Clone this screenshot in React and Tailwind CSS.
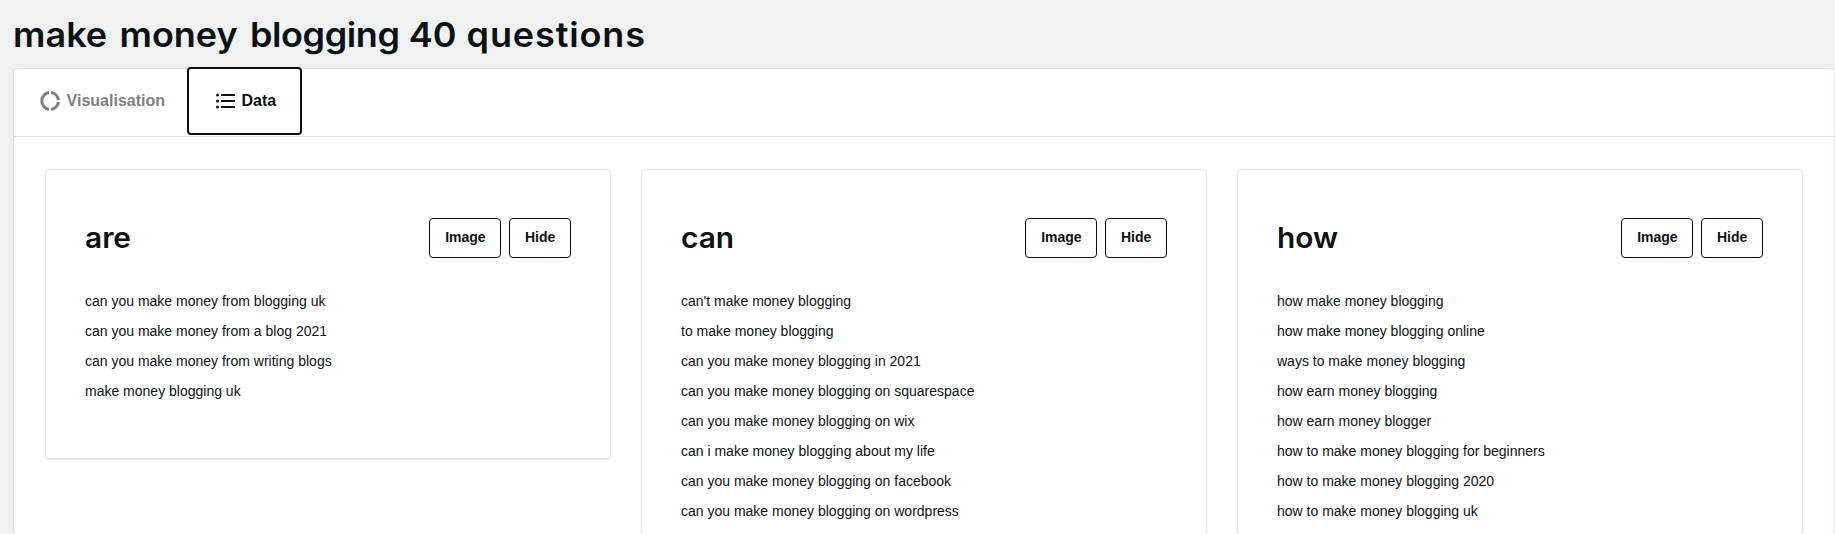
import { useState } from 'react'

const groups = [
  {
    title: 'are',
    questions: [
      'can you make money from blogging uk',
      'can you make money from a blog 2021',
      'can you make money from writing blogs',
      'make money blogging uk',
    ],
  },
  {
    title: 'can',
    questions: [
      "can't make money blogging",
      'to make money blogging',
      'can you make money blogging in 2021',
      'can you make money blogging on squarespace',
      'can you make money blogging on wix',
      'can i make money blogging about my life',
      'can you make money blogging on facebook',
      'can you make money blogging on wordpress',
    ],
  },
  {
    title: 'how',
    questions: [
      'how make money blogging',
      'how make money blogging online',
      'ways to make money blogging',
      'how earn money blogging',
      'how earn money blogger',
      'how to make money blogging for beginners',
      'how to make money blogging 2020',
      'how to make money blogging uk',
    ],
  },
]

function WheelIcon() {
  return (
    <svg viewBox="0 0 20 20" className="h-5 w-5" fill="none" stroke="currentColor" strokeWidth="3">
      <path d="M11 1.6A8.5 8.5 0 0 1 18.4 9" />
      <path d="M18.4 11A8.5 8.5 0 0 1 11 18.4" />
      <path d="M9 18.4A8.5 8.5 0 0 1 9 1.6" />
    </svg>
  )
}

function ListIcon() {
  return (
    <svg viewBox="0 0 20 20" className="h-5 w-5" fill="currentColor">
      <circle cx="1.5" cy="4" r="1.5" />
      <circle cx="1.5" cy="10" r="1.5" />
      <circle cx="1.5" cy="16" r="1.5" />
      <path d="M5 3h14v2H5zM5 9h14v2H5zM5 15h14v2H5z" />
    </svg>
  )
}

function CardButton({ children, onClick }) {
  return (
    <button
      type="button"
      onClick={onClick}
      className="h-10 rounded border border-[#0b0f10] px-[14.7px] pb-0.5 text-sm font-bold"
    >
      {children}
    </button>
  )
}

function QuestionCard({ group, onHide }) {
  return (
    <article className="rounded border border-[#e3e5e5] bg-white px-[39px] pt-12 pb-[52px] shadow-[0_1px_1px_rgba(0,0,0,0.08)]">
      <div className="flex items-center justify-between">
        <h2 className="origin-left scale-x-[1.03] font-['Inter','Liberation_Sans',sans-serif] text-[29px] leading-10 font-semibold">
          {group.title}
        </h2>
        <div className="flex gap-2">
          <CardButton>Image</CardButton>
          <CardButton onClick={onHide}>Hide</CardButton>
        </div>
      </div>
      <ul className="mt-7 text-sm leading-[30px]">
        {group.questions.map((question) => (
          <li key={question}>{question}</li>
        ))}
      </ul>
    </article>
  )
}

export default function App() {
  const [hidden, setHidden] = useState([])
  const visible = groups.filter((group) => !hidden.includes(group.title))

  return (
    <div className="h-screen overflow-hidden bg-[#eef1f0] pl-[13px] font-['Liberation_Sans',Arial,sans-serif] text-[#0b1214]">
      <h1 className="h-[68px] w-fit origin-left scale-x-[1.06] pt-[15px] font-['Inter','Liberation_Sans',sans-serif] text-[34px] leading-10 font-semibold [word-spacing:3px] whitespace-nowrap">
        make money <span className="tracking-[-0.4px]">blogging</span>{' '}
        <span className="-ml-[3px]">40</span>{' '}
        <span className="-ml-0.5 tracking-[0.8px]">questions</span>
      </h1>

      <main className="min-h-screen rounded-t border border-[#dfe2e2] bg-white">
        <nav className="flex h-[68px] border-b border-[#dfe2e2] font-bold">
          <button type="button" className="flex items-center gap-[6.6px] pr-[22.4px] pb-[3px] pl-[26px] text-[#808080]">
            <WheelIcon />
            Visualisation
          </button>
          <button
            type="button"
            className="-mt-0.5 flex h-[68px] w-[115px] items-center justify-center gap-1.5 rounded border-2 border-[#0b0f10] pl-0.5"
          >
            <ListIcon />
            Data
          </button>
        </nav>

        <section className="grid grid-cols-3 items-start gap-[30px] px-[31px] pt-8">
          {visible.map((group) => (
            <QuestionCard
              key={group.title}
              group={group}
              onHide={() => setHidden([...hidden, group.title])}
            />
          ))}
        </section>
      </main>
    </div>
  )
}
